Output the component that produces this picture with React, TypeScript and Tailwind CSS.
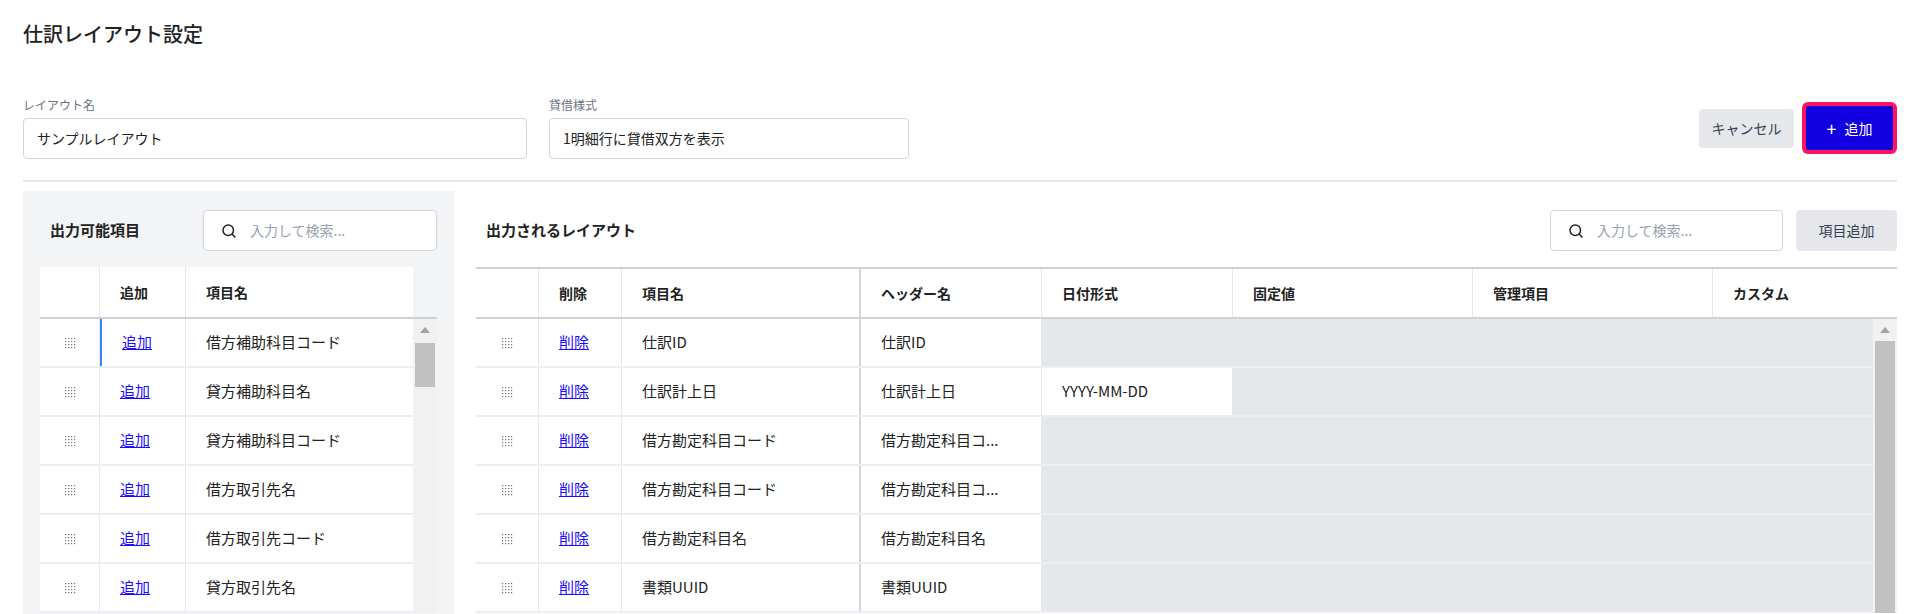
import React from "react";

const font = { fontFamily: '"Noto Sans CJK JP", "Noto Sans", sans-serif' };

function Grip() {
  return (
    <svg width="12" height="12" viewBox="0 0 12 12" className="text-gray-500">
      {[1, 4, 7, 10].map((x) =>
        [2, 5, 8, 11].map((y) => <rect key={`${x}-${y}`} x={x} y={y - 1} width="1.2" height="1.2" fill="currentColor" />)
      )}
    </svg>
  );
}

function SearchBox({ w }: { w: string }) {
  return (
    <div className={`${w} h-[41px] flex items-center gap-3 px-4 bg-white border border-gray-300 rounded`}>
      <svg width="18" height="18" viewBox="0 0 24 24" fill="none" stroke="#222" strokeWidth="2">
        <circle cx="11" cy="11" r="7" />
        <path d="M16 16l4.5 4.5" />
      </svg>
      <span className="text-[14px] text-gray-400">入力して検索...</span>
    </div>
  );
}

const leftRows = ["借方補助科目コード", "貸方補助科目名", "貸方補助科目コード", "借方取引先名", "借方取引先コード", "貸方取引先名"];
const rightRows = [
  ["仕訳ID", "仕訳ID", ""],
  ["仕訳計上日", "仕訳計上日", "YYYY-MM-DD"],
  ["借方勘定科目コード", "借方勘定科目コ...", ""],
  ["借方勘定科目コード", "借方勘定科目コ...", ""],
  ["借方勘定科目名", "借方勘定科目名", ""],
  ["書類UUID", "書類UUID", ""],
];

function Scrollbar({ thumbTop }: { thumbTop: string }) {
  return (
    <div className="w-[24px] bg-[#f1f1f1] flex flex-col items-center">
      <div className="mt-[8px] w-0 h-0 border-l-[5px] border-r-[5px] border-b-[6px] border-l-transparent border-r-transparent border-b-[#a3a3a3]" />
      <div className={`${thumbTop} w-[20px] flex-1 bg-[#c1c1c1]`} />
    </div>
  );
}

export default function App() {
  return (
    <div style={font} className="w-[1920px] h-[614px] overflow-hidden bg-white text-[#222] pl-[23px] pr-[23px]">
      <h1 className="pt-[20px] text-[20px] font-medium leading-[28px]">仕訳レイアウト設定</h1>

      <div className="mt-[49px] flex items-end">
        <div className="w-[504px]">
          <div className="text-[12px] text-gray-500 leading-[16px] mb-[5px]">レイアウト名</div>
          <div className="h-[41px] border border-gray-300 rounded flex items-center px-[13px] text-[14px]">サンプルレイアウト</div>
        </div>
        <div className="w-[360px] ml-[22px]">
          <div className="text-[12px] text-gray-500 leading-[16px] mb-[5px]">貸借様式</div>
          <div className="h-[41px] border border-gray-300 rounded flex items-center px-[13px] text-[14px]">1明細行に貸借双方を表示</div>
        </div>
        <div className="ml-auto flex items-center gap-[8px] mb-[5px]">
          <button className="w-[95px] h-[39px] rounded bg-[#e5e7eb] text-[14px] text-gray-700">キャンセル</button>
          <div className="rounded-[6px] bg-[#ff1361] p-[4px]">
            <button className="w-[87px] h-[44px] rounded-[2px] bg-[#1200e0] text-white text-[14px] flex items-center justify-center gap-[8px]">
              <span className="text-[18px] leading-none">+</span>追加
            </button>
          </div>
        </div>
      </div>

      <div className="mt-[21px] h-[2px] bg-[#e5e7eb]" />

      <div className="mt-[9px] flex">
        <div className="w-[431px] bg-[#f3f4f6] pl-[17px] pr-[17px] pt-[19px] h-[430px]">
          <div className="flex items-center pl-[10px]">
            <span className="text-[15px] font-bold w-[153px]">出力可能項目</span>
            <SearchBox w="w-[234px]" />
          </div>
          <div className="mt-[16px] bg-white">
            <div className="flex h-[52px] border-b-2 border-[#cfd1d5] text-[14px] font-bold">
              <div className="w-[60px] border-r border-gray-200" />
              <div className="w-[86px] border-r border-gray-200 flex items-center pl-[20px]">追加</div>
              <div className="w-[227px] flex items-center pl-[20px]">項目名</div>
              <div className="w-[24px] bg-[#f3f4f6]" />
            </div>
            <div className="flex">
              <div className="flex-1">
                {leftRows.map((r, i) => (
                  <div key={i} className="flex h-[49px] border-b-2 border-[#eceef1] text-[15px]">
                    <div className="w-[60px] border-r border-gray-200 flex items-center justify-center"><Grip /></div>
                    <div className={`w-[86px] border-r flex items-center pl-[20px] ${i === 0 ? "border-l-2 border-l-[#3b82f6] border-r-gray-200" : "border-gray-200"}`}>
                      <span className="text-[#1a0dff] underline">追加</span>
                    </div>
                    <div className="flex-1 flex items-center pl-[20px]">{r}</div>
                  </div>
                ))}
              </div>
              <Scrollbar thumbTop="mt-[10px] max-h-[44px]" />
            </div>
          </div>
        </div>

        <div className="flex-1 ml-[22px] pt-[19px]">
          <div className="flex items-center">
            <span className="text-[15px] font-bold ml-[10px]">出力されるレイアウト</span>
            <div className="ml-auto flex items-center gap-[13px]">
              <SearchBox w="w-[233px]" />
              <button className="w-[101px] h-[41px] rounded bg-[#e5e7eb] text-[14px] text-gray-700">項目追加</button>
            </div>
          </div>
          <div className="mt-[16px]">
            <div className="flex h-[52px] border-t-2 border-b-2 border-[#cfd1d5] text-[14px] font-bold">
              <div className="w-[63px] border-r border-gray-200" />
              <div className="w-[83px] border-r border-gray-200 flex items-center pl-[20px]">削除</div>
              <div className="w-[239px] border-r-2 border-gray-300 flex items-center pl-[20px]">項目名</div>
              <div className="w-[181px] border-r border-gray-200 flex items-center pl-[20px]">ヘッダー名</div>
              <div className="w-[191px] border-r border-gray-200 flex items-center pl-[20px]">日付形式</div>
              <div className="w-[240px] border-r border-gray-200 flex items-center pl-[20px]">固定値</div>
              <div className="w-[240px] border-r border-gray-200 flex items-center pl-[20px]">管理項目</div>
              <div className="flex-1 flex items-center pl-[20px]">カスタム</div>
            </div>
            <div className="flex">
              <div className="flex-1">
                {rightRows.map((r, i) => (
                  <div key={i} className="flex h-[49px] border-b-2 border-[#eceef1] text-[15px]">
                    <div className="w-[63px] border-r border-gray-200 flex items-center justify-center"><Grip /></div>
                    <div className="w-[83px] border-r border-gray-200 flex items-center pl-[20px]">
                      <span className="text-[#1a0dff] underline">削除</span>
                    </div>
                    <div className="w-[239px] border-r-2 border-gray-300 flex items-center pl-[20px]">{r[0]}</div>
                    <div className="w-[181px] border-r border-gray-200 flex items-center pl-[20px]">{r[1]}</div>
                    <div className={`w-[191px] border-r border-gray-200 flex items-center pl-[20px] ${r[2] ? "bg-white" : "bg-[#e5e7eb]"}`}>{r[2]}</div>
                    <div className="w-[240px] border-r border-gray-200 bg-[#e5e7eb]" />
                    <div className="w-[240px] border-r border-gray-200 bg-[#e5e7eb]" />
                    <div className="flex-1 bg-[#e5e7eb]" />
                  </div>
                ))}
              </div>
              <Scrollbar thumbTop="mt-[8px]" />
            </div>
          </div>
        </div>
      </div>
    </div>
  );
}
